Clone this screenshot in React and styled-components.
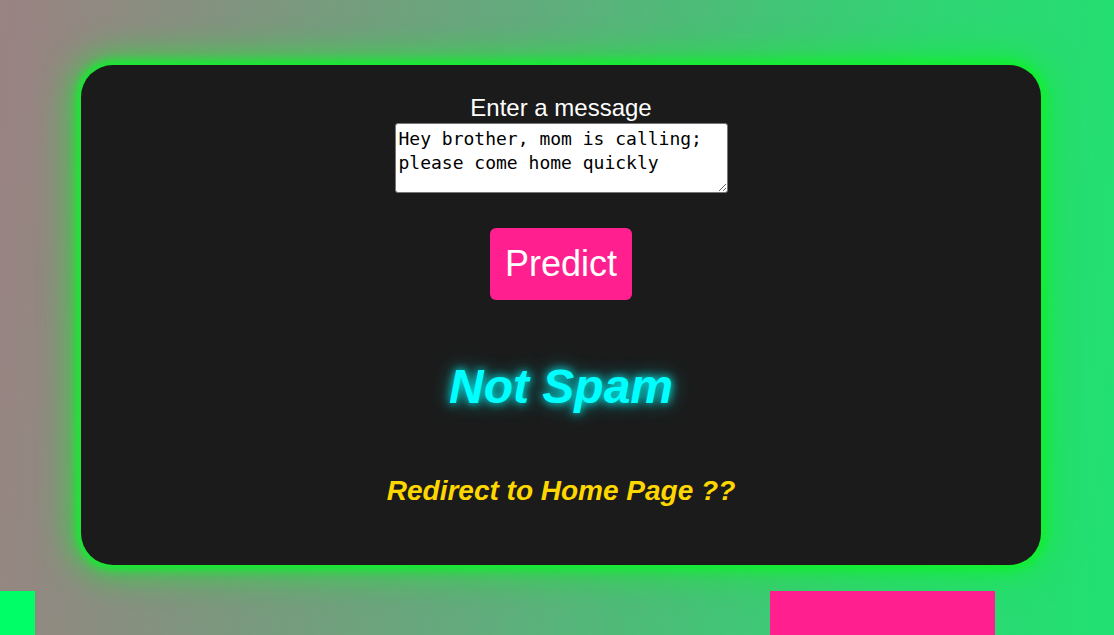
import React from "react";
import styled, { createGlobalStyle } from "styled-components";

const GlobalStyle = createGlobalStyle`
  html, body {
    margin: 0;
    padding: 0;
    height: 100%;
    overflow: hidden;
  }
  body {
    font-family: "Liberation Sans", Arial, sans-serif;
    background: linear-gradient(95deg, #9a8282 0%, #62ab7c 45%, #2fd573 80%, #22e172 100%);
  }
`;

export default function App() {
  return (
    <Page>
      <GlobalStyle />
      <Card>
        <Label htmlFor="msg">Enter a message</Label>
        <Message
          id="msg"
          defaultValue="Hey brother, mom is calling; please come home quickly"
        />
        <PredictButton>Predict</PredictButton>
        <Result>Not Spam</Result>
        <Redirect href="#">Redirect to Home Page ??</Redirect>
      </Card>
      <Footer>
        <Block color="#00ff66" width="35px" />
        <Block color="#ff1f8e" width="225px" />
      </Footer>
    </Page>
  );
}

const Page = styled.div`
  padding: 65px 0 0 81px;
`;

const Card = styled.div`
  width: 960px;
  height: 500px;
  box-sizing: border-box;
  padding-top: 29px;
  background: #1b1b1b;
  border-radius: 32px;
  box-shadow: 0 0 8px 4px #10f02c, 0 0 34px 8px rgba(16, 240, 44, 0.75);
  display: flex;
  flex-direction: column;
  align-items: center;
`;

const Label = styled.label`
  color: #ffffff;
  font-size: 24px;
  line-height: 28px;
`;

const Message = styled.textarea`
  width: 333px;
  height: 70px;
  box-sizing: border-box;
  margin-top: 1px;
  padding: 3px 3px;
  border: 1px solid #767676;
  border-radius: 3px;
  font-family: "DejaVu Sans Mono", monospace;
  font-size: 18px;
  line-height: 24px;
  color: #000;
  background: #fff;
`;

const PredictButton = styled.button`
  margin-top: 35px;
  width: 142px;
  height: 72px;
  border: none;
  border-radius: 6px;
  background: #ff1f8e;
  color: #ffffff;
  font-family: "Liberation Sans", Arial, sans-serif;
  font-size: 36px;
  cursor: pointer;
`;

const Result = styled.h2`
  margin: 59px 0 0;
  font-size: 48px;
  line-height: 56px;
  font-weight: bold;
  font-style: italic;
  color: #00ffff;
  text-shadow: 0 0 10px #00ffff, 0 0 20px rgba(0, 255, 255, 0.5);
`;

const Redirect = styled.a`
  margin-top: 60px;
  font-size: 28px;
  line-height: 32px;
  font-weight: bold;
  font-style: italic;
  color: #ffd700;
  text-decoration: none;
`;

const Footer = styled.div`
  display: flex;
  justify-content: space-between;
  width: 995px;
  margin: 26px 0 0 -81px;
`;

const Block = styled.div`
  width: ${(p) => p.width};
  height: 60px;
  background: ${(p) => p.color};
`;
